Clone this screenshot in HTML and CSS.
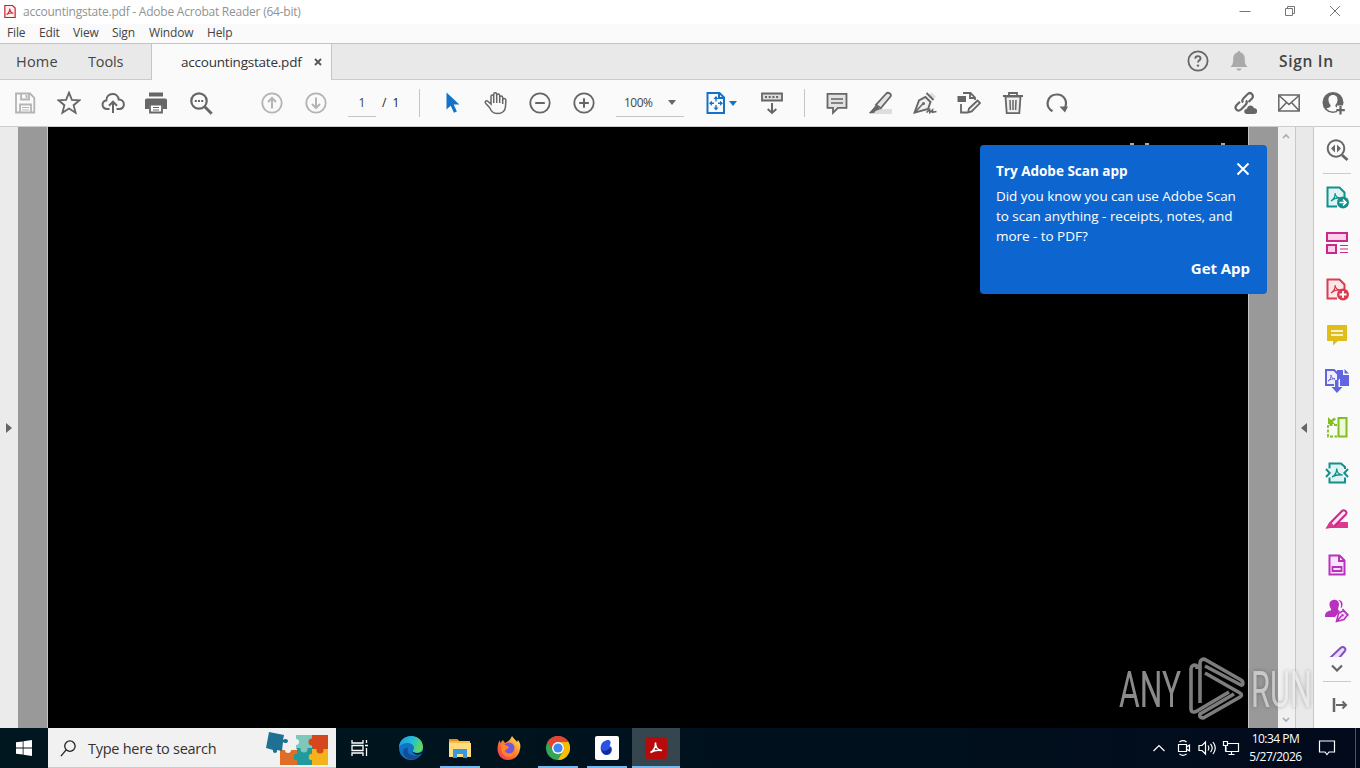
FILE: index.html
```html
<!DOCTYPE html>
<html lang="en">
<head>
  <meta charset="UTF-8" />
  <meta name="viewport" content="width=device-width, initial-scale=1.0" />
  <title>accountingstate.pdf - Adobe Acrobat Reader (64-bit)</title>
  <link rel="stylesheet" href="styles.css">
</head>
<body>
  <div class="titlebar">
    <svg class="app-icon" viewBox="0 0 14 16"><path d="M1 1h9l3 3v11H1z" fill="#fff0ee" stroke="#c9202f" stroke-width="1.4"/><path d="M3 11.500c2-1 4-4.500 3.700-7 0 3 1.500 5 4.300 5.500-3-.6-6 .2-8 1.500z" fill="none" stroke="#c9202f" stroke-width="1.200"/></svg>
    <span class="title">accountingstate.pdf - Adobe Acrobat Reader (64-bit)</span>
    <div class="window-buttons">
      <svg viewBox="0 0 12 12"><path d="M.5 6.500h11"/></svg>
      <svg viewBox="0 0 12 12"><path d="M1.500 3.500h7v7h-7zM3.500 3.500v-2h7v7h-2"/></svg>
      <svg viewBox="0 0 12 12"><path d="M1 1l10 10M11 1L1 11"/></svg>
    </div>
  </div>

  <div class="menubar">
    <span class="m-file">File</span><span class="m-edit">Edit</span><span class="m-view">View</span><span class="m-sign">Sign</span><span class="m-window">Window</span><span>Help</span>
  </div>

  <div class="tabs">
    <div class="tab-links"><span class="home">Home</span><span class="tools">Tools</span></div>
    <div class="tab-active"><span>accountingstate.pdf</span><svg viewBox="0 0 8 8"><path d="M1 1l6 6M7 1L1 7" stroke="#555" stroke-width="1.800"/></svg></div>
    <div class="tab-right">
      <svg class="help" viewBox="0 0 24 24"><circle cx="12" cy="12" r="9.600" fill="none" stroke="#666" stroke-width="1.800"/><path d="M9.200 9.600c.2-3.400 5.600-3.100 5.300 0-.1 1.700-2.500 1.900-2.500 4" fill="none" stroke="#666" stroke-width="1.900"/><circle cx="12" cy="16.600" r="1.200" fill="#666"/></svg>
      <svg class="bell" viewBox="0 0 24 24"><path d="M12 2c1 0 1.500.6 1.500 1.600 3 .8 4.300 3 4.300 6.400 0 4.500.8 6 2.700 8h-17c1.900-2 2.700-3.500 2.700-8 0-3.400 1.300-5.600 4.300-6.400C10.500 2.600 11 2 12 2zM9.500 19.500h5c-.3 2.800-4.700 2.800-5 0z" fill="#aaa"/></svg>
      <span class="signin">Sign In</span>
    </div>
  </div>

  <div class="toolbar">
    <div class="tools-group file-tools">
      <svg class="off" viewBox="0 0 24 24"><path d="M3 2.500h14l4.300 4.300v14.700H3zM8 2.500v6h8v-6M7 21v-7.500h11V21M13.500 4v3"/><path d="M9 16.500h7M9 19h7" stroke-width="1"/></svg>
      <svg viewBox="0 0 24 24"><path d="M12 1.600l2.900 7.200 7.700.5-6 4.900 2 7.500-6.600-4.200-6.600 4.200 2-7.500-6-4.900 7.700-.5z"/></svg>
      <svg viewBox="0 0 24 24"><path d="M8.500 18H6.300C.5 18-.2 10 5.300 9.600 5.500 1.200 17 .7 17.700 8.600c6.800-.2 6.700 9.400.8 9.400h-3M12 22V11M8 14.700l4-4 4 4" stroke-width="2"/></svg>
      <svg viewBox="0 0 24 24"><path d="M4 1.500h14v4H4zM2 7.500h18c1.200 0 2 .8 2 1.800V18h-4v-4H4v4H0V9.300c0-1 .8-1.800 2-1.800z" fill="#666" stroke="none"/><path d="M5 13.500h12v8H5z" fill="#fff"/><path d="M8 16.500h6M8 19h6" stroke-width="1.200"/></svg>
      <svg viewBox="0 0 24 24"><circle cx="10" cy="10" r="7.700" stroke-width="2.200"/><path d="M15.700 15.700l7 7" stroke-width="2.900"/><path d="M5.800 10h2M9 10h2M12.200 10h2" stroke-width="2"/></svg>
    </div>
    <div class="tools-group page-tools">
      <svg class="off" viewBox="0 0 24 24"><circle cx="12" cy="12" r="9.700"/><path d="M12 17.500V7M8 11l4-4 4 4" stroke-width="2"/></svg>
      <svg class="off" viewBox="0 0 24 24"><circle cx="12" cy="12" r="9.700"/><path d="M12 6.500V17M8 13l4 4 4-4" stroke-width="2"/></svg>
    </div>
    <div class="page-input">1</div>
    <span class="page-count">/ 1</span>
    <div class="sep"></div>
    <div class="tools-group view-tools">
      <svg viewBox="0 0 24 24"><path d="M6.500 1.500v17l4.200-3.800 3.200 7 3-1.300-3.200-6.800h5.700z" fill="#1473c9" stroke="none"/></svg>
      <svg viewBox="0 0 24 24"><path d="M5.500 16.500l-3.700-4c-1.600-2 .7-3.500 2.300-2L7 13V5.500c0-2 2.700-2 2.700 0v-2c0-2.300 3-2.300 3 0v1c0-2 3-2 3 0V6.500c0-2 3-2 3 0V9c.2-2 3.200-2 3.200.3l-.4 6.200c-.4 5-3.300 7-8 7-4.500 0-6-2-8-6zM9.700 5.500V12M12.700 4.500V12M15.700 5.500V12M18.700 8v5" stroke-width="1.500"/></svg>
      <svg viewBox="0 0 24 24"><circle cx="12" cy="12" r="9.700"/><path d="M7.200 12h9.600" stroke-width="2"/></svg>
      <svg viewBox="0 0 24 24"><circle cx="12" cy="12" r="9.700"/><path d="M7.200 12h9.600M12 7.200v9.600" stroke-width="2"/></svg>
    </div>
    <div class="zoom-select"><span>100%</span><i class="caret"></i></div>
    <div class="fit">
      <svg viewBox="0 0 24 24"><path d="M3.500 2h12L20 6.500V22H3.500zM15 2v5h5" stroke="#1473c9" stroke-width="2"/><path d="M12 6v4.500M12 14v4M6 12.300h4M14 12.300h4" stroke="#1473c9" stroke-width="1.400"/><path d="M12 5l2.500 3h-5zM12 19.500l2.500-3h-5zM5 12.300l3-2.500v5zM19 12.300l-3-2.500v5z" fill="#1473c9" stroke="none"/></svg>
      <i class="caret blue"></i>
    </div>
    <svg class="read-mode" viewBox="0 0 24 24"><path d="M2 2.500h20v7H2z" fill="#ddd"/><path d="M5 6h14" stroke-dasharray="2 1.700"/><path d="M12 12v10M7.700 18l4.300 4 4.300-4" stroke-width="2"/></svg>
    <div class="sep"></div>
    <div class="tools-group edit-tools">
      <svg viewBox="0 0 24 24"><path d="M2.500 2.800h19v14H13l-5 5v-5H2.500z" fill="#e2e2e2"/><path d="M6 8h12M6 12h12" stroke-width="1.400"/></svg>
      <svg viewBox="0 0 24 24"><path d="M9 18h14v5H4z" fill="#ddd" stroke="none"/><path d="M17.300 2.500c2-2 6 .8 4.200 3L11.700 17.300l-4.800-3.500z" fill="#e3e3e3"/><path d="M6.500 15l4 3-4 1.500-1.500 2.200-4.500.2 3.700-4z" fill="#666" stroke-width="1"/></svg>
      <svg viewBox="0 0 24 24"><path d="M16 4l2.500-2.500 4.500 4-2.500 2.500z" fill="#ddd" stroke="none"/><path d="M13.500 2l7 7M12.500 6l5 5-2.500 7L1.500 21.700l4.500-12.200z" fill="#f0f0f0" stroke-width="1.900"/><path d="M1.500 21.700l8.500-9" stroke-width="1.500"/><circle cx="10.500" cy="12.500" r="1.500" fill="#666" stroke="none"/><path d="M13.500 21.500l3-3 .3 3 2.700-2.500v2.300l4-.8" stroke-width="1.700"/></svg>
      <svg viewBox="0 0 24 24"><path d="M6 2h7.500L18 6.500V9M13 2v5h5M4 13v8.500h6"/><path d="M.5 5h8.500v6H.5z" fill="#666" stroke="none"/><path d="M11 21.500l1-4 8.500-8 2.500 2.600-8.300 8.300z" fill="#eee"/></svg>
      <svg viewBox="0 0 24 24"><path d="M2 5h20M8 4.500V2h8v2.500"/><path d="M4.500 5.500h15l-1.200 16.700H5.700z" fill="#eee"/><path d="M9 9l.4 10M12 9v10M15 9l-.4 10" stroke-width="1.500"/></svg>
      <svg viewBox="0 0 24 24"><path d="M7.500 20.300C-1 15.200 2.500 3.500 12 3.500c7.500 0 11.200 7.500 7.500 14" stroke-width="2.200"/><path d="M14.500 15.500l8.500 0-3 6z" fill="#666" stroke="none"/></svg>
    </div>
    <div class="tools-group share-tools">
      <svg viewBox="0 0 24 24"><path d="M10 11.500c-1.500-1.500-.5-3.300 1-4.800l3.500-3.500c3-3 7 1 4.500 4.300l-3.500 3.500M13 9.500c1.500 1.500.5 3.500-1 5l-4 4C5 21.200.7 17.800 3.500 14.200L7 10.800" stroke-width="2.200"/><path d="M14 23c-3.700 0-3.700-5 0-5.300.5-4.400 6.300-4.200 6.800-.7 4.500 0 4.300 6 .7 6z" fill="#666" stroke="none"/></svg>
      <svg viewBox="0 0 24 24"><path d="M1.800 4h20.400v16H1.800zM2 4.500l10 9 10-9M2 19.500l7.500-8M22 19.500l-7.500-8" stroke-width="1.500"/></svg>
      <svg viewBox="0 0 24 24"><circle cx="12" cy="11.500" r="10.500" fill="#666" stroke="none"/><path d="M12 4c3.300 0 4.800 2.300 4.500 5.300-.2 2-1 3.700-2 4.700-.5 1.700.5 2.200 4 3.500-1.500 2-4 3-6.500 3s-5-1-6.500-3c3.500-1.300 4.500-1.800 4-3.500-1-1-1.800-2.700-2-4.700C7.200 6.300 8.700 4 12 4z" fill="#fafafa" stroke="none"/><path d="M16 14.500h8v9h-8z" fill="#fafafa" stroke="none"/><path d="M19.500 15v8.500M15.300 19.200h8.500" stroke-width="2.200"/></svg>
    </div>
  </div>

  <div class="workspace">
    <div class="nav-strip"><i class="arrow right"></i></div>
    <div class="canvas">
      <div class="pdf-page">
        <i class="speck s1"></i><i class="speck s2"></i><i class="speck s3"></i>
      </div>
      <div class="promo">
        <div class="promo-head"><b>Try Adobe Scan app</b><svg viewBox="0 0 14 14"><path d="M1.500 1.500l11 11M12.500 1.500l-11 11" stroke="#fff" stroke-width="2"/></svg></div>
        <p>Did you know you can use Adobe Scan<br>to scan anything - receipts, notes, and<br>more - to PDF?</p>
        <div class="promo-action">Get App</div>
      </div>
    </div>
    <div class="scrollbar">
      <svg viewBox="0 0 8 6"><path d="M1 5l3-3 3 3"/></svg>
      <svg viewBox="0 0 8 6"><path d="M1 1l3 3 3-3"/></svg>
    </div>
    <div class="pane-strip"><i class="arrow left"></i></div>
    <div class="rail">
      <svg class="find" viewBox="0 0 24 24"><circle cx="11" cy="10.500" r="8.300" fill="none" stroke="#666" stroke-width="2"/><path d="M17 17l5.500 5" stroke="#666" stroke-width="2.800"/><path d="M10 6.500v8l-4-4zM12 6.500v8l4-4z" fill="#666"/></svg>
      <div class="rail-list">
        <svg viewBox="0 0 24 24"><path d="M12 21.500H2.500v-19h12l5 5V12" fill="#dff3f2" stroke="#12908c" stroke-width="2"/><path d="M6 16c3-2 4.500-5 4-8 .3 3 2.500 5 5.500 5-4-.3-7 .7-9.500 3" fill="none" stroke="#12908c" stroke-width="1.200"/><circle cx="18" cy="17.500" r="6" fill="#12908c"/><path d="M14.500 17.500h6M18 14.500l3 3-3 3" fill="none" stroke="#fff" stroke-width="1.700"/></svg>
        <svg viewBox="0 0 24 24"><path d="M2 2h20v8H2zM2 14h9v8H2z" fill="#ffd0ec" stroke="#ca288b" stroke-width="2"/><path d="M15 14.500h8M15 18h8M15 21.500h8" stroke="#ca288b" stroke-width="1.200"/></svg>
        <svg viewBox="0 0 24 24"><path d="M12 21.500H2.500v-19h12l5 5V12" fill="#ffe7e9" stroke="#d93c50" stroke-width="2"/><path d="M6 16c3-2 4.500-5 4-8 .3 3 2.500 5 5.500 5-4-.3-7 .7-9.500 3" fill="none" stroke="#d93c50" stroke-width="1.200"/><circle cx="18" cy="17.500" r="6" fill="#d93c50"/><path d="M14.500 17.500h7M18 14v7" stroke="#fff" stroke-width="1.800"/></svg>
        <svg viewBox="0 0 24 24"><path d="M3 2h18c1 0 1 .5 1 1v14c0 .7-.3 1-1 1h-8l-5 4.500V18H3c-.7 0-1-.3-1-1V3c0-.5.3-1 1-1z" fill="#e1bd1a"/><path d="M6 8h12M6 12h12" stroke="#fff" stroke-width="1.700"/></svg>
        <svg viewBox="0 0 24 24"><path d="M9 16H1V1h8l4 4v6" fill="#eef" stroke="#6265df" stroke-width="2"/><path d="M3 12c2-1 3.500-4 3-6 0 2 1.500 3.500 4 4-2-.5-5 .3-7 2" fill="none" stroke="#6265df" stroke-width="1"/><path d="M12 1h6v5h6v11h-9v-7h-3zM19.500 0l4.500 4.500h-4.500zM10 11h3.500v7h4L12 24l-5.500-6H10z" fill="#6265df"/></svg>
        <svg viewBox="0 0 24 24"><path d="M13.500 3h8v18.500h-8z" fill="#edf9db" stroke="#82bd22" stroke-width="2"/><path d="M12 10H3v11.500h9" fill="none" stroke="#82bd22" stroke-width="1.800" stroke-dasharray="3 1.500"/><path d="M3 2v7h7L7.700 6.700 11 4.500 9.500 2.500 6 5z" fill="#82bd22"/></svg>
        <svg viewBox="0 0 24 24"><path d="M5.500 8h13v9h-13z" fill="#dff3f2"/><path d="M4.500 7.500v-5H16L20 6v2M20 16.500v5H4.500v-5" fill="#dff3f2" stroke="#12908c" stroke-width="2"/><path d="M1 8l3.700 4L1 16M23 8l-3.700 4 3.700 4" fill="none" stroke="#12908c" stroke-width="2"/><path d="M7 16c3-1 5-5 4.700-8.500 0 3 2 6 5.800 6.500-4-.6-7 .1-10.500 2" fill="none" stroke="#12908c" stroke-width="1.400"/></svg>
        <svg viewBox="0 0 24 24"><path d="M14 15h8c.6 0 1 .4 1 1v5H6z" fill="#df388f"/><path d="M5 16.200L17 4c2-2 6 1 4 3.200L9 19.500 2.500 20.500z" fill="#ffe3f2" stroke="#ca288b" stroke-width="2"/><path d="M5.500 15l5 5-9.500 1.300z" fill="#df388f"/></svg>
        <svg viewBox="0 0 24 24"><path d="M4.500 2.500h10l5 5v14h-15zM14 2.500v5.500h5.500" fill="#fbe4fc" stroke="#b931be" stroke-width="2"/><path d="M7.500 14h9v4h-9z" fill="none" stroke="#b931be" stroke-width="1.800"/></svg>
        <svg viewBox="0 0 24 24"><path d="M8 1c5-1.500 7 3 5.500 7-.8 2.500-.5 3.500 1.500 4l-5 6H0c0-5 2-5.500 5.500-6.500C7 11 5.500 9.500 5 8 3.500 4.500 5 1.600 8 1zM13 1c4 0 5.500 3 4 7l-1.500 1.500c1-4 .6-6.500-2.500-8.500z" fill="#b931be"/><path d="M11.500 22.500l2-8 5-3 4 4.500-3.500 4.500zM17.500 10l6 6.500M11.500 22.500l5-5.500" fill="#fbe4fc" stroke="#b931be" stroke-width="1.600"/><circle cx="17.500" cy="16.200" r="1.200" fill="#b931be"/></svg>
        <svg class="clipped" viewBox="0 0 24 12"><path d="M5 13L15.500 3c3-2.500 6.500.5 4 3.500L14 13z" fill="#ecdcfa" stroke="#8450bd" stroke-width="2"/></svg>
      </div>
      <svg class="more" viewBox="0 0 14 8"><path d="M2 1.500l5 5 5-5"/></svg>
      <div class="rail-line"></div>
      <svg class="expand" viewBox="0 0 16 16"><path d="M2 1v14" stroke-width="2.500"/><path d="M4 8h10M10.500 4.500L14 8l-3.500 3.500"/></svg>
    </div>

    <svg class="watermark" viewBox="0 0 210 70">
      <g class="wm-text"><text x="5" y="52" textLength="62" lengthAdjust="spacingAndGlyphs">ANY</text><text x="137" y="52" textLength="61" lengthAdjust="spacingAndGlyphs">RUN</text></g>
      <path class="wm-logo" d="M83 14v-3c-3-2-6 0-6 3v40c0 3 3 4 6 2l32-19M86 48V8c0-3 3-5 6-3l35 20c3 2 2 6 0 5L91 11M91 18l35 20c2 1 2 3 0 4L91 62c-3 2-6 0-5-3l34-20"/>
    </svg>
  </div>

  <div class="taskbar">
    <div class="start"><svg viewBox="0 0 16 16"><path d="M0 2.300l6.700-.9v6.200H0zM7.500 1.300L16 0v7.600H7.500zM0 8.400h6.700v6.200L0 13.700zM7.500 8.400H16V16l-8.500-1.300z" fill="#fff"/></svg></div>
    <div class="search">
      <svg class="search-icon" viewBox="0 0 18 18"><circle cx="10.500" cy="6.500" r="5.500"/><path d="M6.500 10.500L1 17"/></svg>
      <span>Type here to search</span>
      <svg class="puzzle" viewBox="0 0 64 36">
        <path d="M14 20h17v15H14z" fill="#df6e28"/><path d="M30 5h16v14H30z" fill="#7fc6bb"/><path d="M46 5h16v15H46z" fill="#d5471c"/><path d="M31 18h16v17H31z" fill="#219a9d"/><path d="M46 19h16v16H46z" fill="#f4b21b"/>
        <circle cx="22" cy="20" r="3" fill="#f1f1f1"/><circle cx="31" cy="27" r="3.300" fill="#219a9d"/><circle cx="38" cy="19" r="3.500" fill="#7fc6bb"/><circle cx="46" cy="12" r="3.500" fill="#d5471c"/><circle cx="46" cy="27" r="3.300" fill="#f4b21b"/><circle cx="54" cy="20" r="3.500" fill="#d5471c"/><circle cx="30" cy="12" r="3" fill="#f1f1f1"/>
        <path d="M3 2l15 3-1 5c2-2 5-1 5 1s-3 3-5 1l-1 9-5-1c1 4-5 4-4 0l-7-2z" fill="#1f7194"/>
      </svg>
    </div>
    <div class="task"><svg class="task-view" viewBox="0 0 18 18"><path d="M1 1v3h11V1M1 17v-3h11v3M1 6.500h11v5H1zM15.500 1v3M15.500 9v8M14 6.500h3"/></svg></div>
    <div class="apps">
      <div class="app"><svg viewBox="0 0 24 24"><defs><linearGradient id="edge" x1="0" y1="0" x2="1" y2="0.300"><stop offset="0" stop-color="#1698dd"/><stop offset=".6" stop-color="#25bfd0"/><stop offset="1" stop-color="#61d65d"/></linearGradient></defs><circle cx="12" cy="12" r="12" fill="#1173c7"/><path d="M0 11C1-3 23-4 24 11c0 5-5 7-10 5-1-1 1-2 1-4 0-6-11-7-15-1z" fill="url(#edge)"/><path d="M9 12c-2 6 4 9 12 7-4 6-13 6-16 0-2-4 0-8 4-7z" fill="#154d91"/><path d="M13 15c3 3 7 3 11 0-2 5-9 5-11 0z" fill="#01141d"/></svg></div>
      <div class="app open"><svg viewBox="0 0 24 24"><path d="M1 3h8l2 2h11v16H1z" fill="#f4bd40"/><path d="M1 7h22v14H1z" fill="#ffdc7b"/><path d="M1 3h8l2 2H1z" fill="#e58c20"/><path d="M5 13h14v9h-4v-4H9v4H5z" fill="#3898df"/></svg></div>
      <div class="app"><svg viewBox="0 0 24 24"><defs><linearGradient id="fox" x1="1" y1="0" x2="0" y2="1"><stop offset="0" stop-color="#fff15b"/><stop offset=".5" stop-color="#ff7d27"/><stop offset="1" stop-color="#f22c5a"/></linearGradient></defs><path d="M15 0c2 3 4 4 5 6l1-2c2 3 3 5 2 9-1 7-6 11-12 11C3 24-1 16 1 9c0-2 1-3 2-5v3l3-3 2 3c3-1 5-3 7-7z" fill="url(#fox)"/><circle cx="12" cy="12" r="5.500" fill="#7655df"/><path d="M4 9c3-1 5 0 8 2-1 3-4 2-4 4 2 4 7 3 9 0 0 9-14 8-13-6z" fill="#ff852b"/></svg></div>
      <div class="app open"><svg viewBox="0 0 24 24"><circle cx="12" cy="12" r="12" fill="#35a654"/><path d="M1.600 6A12 12 0 0 1 22.400 6H12a6 6 0 0 0-5.200 9z" fill="#e94235"/><path d="M22.400 6A12 12 0 0 1 12 24l5.200-9A6 6 0 0 0 12 6z" fill="#fbbd04"/><circle cx="12" cy="12" r="6" fill="#fff"/><circle cx="12" cy="12" r="4.600" fill="#4285f4"/></svg></div>
      <div class="app open"><svg viewBox="0 0 24 24"><rect width="24" height="24" rx="2" fill="#fff"/><path d="M11 4.500c4-1.500 6 1.500 3.500 5.500 4 .5 3 8.500-2 9-8 1-9.500-12.500-1.500-14.500z" fill="#2953e5"/><path d="M16 12c-2 0-3 1.500-4.500 2.500-2 .8-4 0-5-1 1 7 10 7 9.500-1.500z" fill="#142c8b"/></svg></div>
      <div class="app open current"><svg viewBox="0 0 24 24"><rect x="1" y="1" width="22" height="22" rx="3" fill="#b60b0b"/><path d="M6.500 16.500c2.500-1 5.500-5 5-10-.3 4 2 7.500 6.500 8-4-.8-8 0-11.500 2z" fill="none" stroke="#fff" stroke-width="1.600"/></svg></div>
    </div>
    <div class="tray">
      <svg class="chevron" viewBox="0 0 14 14"><path d="M1.500 10L7 4.500l5.500 5.500"/></svg>
      <svg class="camera" viewBox="0 0 14 16"><path d="M1.500 4.500h8v7h-8zM9.500 7l3-2v6l-3-2M2.500 2c2-1.500 5-1.500 7 0M2.500 14c2 1.500 5 1.500 7 0"/></svg>
      <svg class="volume" viewBox="0 0 18 16"><path d="M1 5.500h3l3.500-3.500v12L4 10.500H1zM10 5.500c1 1.500 1 3.500 0 5M12.500 3.800c2 2.500 2 6 0 8.400M15 2c3 4 3 8 0 12"/></svg>
      <svg class="network" viewBox="0 0 18 16"><path d="M6 3.500h10.500v8H4v-5M9.500 11.500v2.500M6.500 14.500h6M1.500 1.500h4v4h-4zM3.500 5.500v6"/></svg>
      <div class="clock"><span class="time">10:34 PM</span><span class="date">5/27/2026</span></div>
      <svg class="notice" viewBox="0 0 18 18"><path d="M1.500 2h15v11H11L9 15.500 7 13H1.500z"/></svg>
      <div class="show-desktop"></div>
    </div>
  </div>
</body>
</html>
```

FILE: styles.css
```css
    * {
      box-sizing: border-box;
    }

    body {
      margin: 0;
      width: 1360px;
      height: 768px;
      overflow: hidden;
      display: flex;
      flex-direction: column;
      font-family: "Open Sans", "Noto Sans", sans-serif;
      color: #444;
      background: #fafafa;
      white-space: nowrap;
    }

    svg { display: block; flex: none; }

    .titlebar {
      height: 24px;
      background: #fff;
      display: flex;
      align-items: center;
      padding: 0 0 2px 4px;
      font-size: 12px;
      color: #929292;
    }

    .app-icon { width: 12px; height: 15px; margin-right: 7px; }
    .title { letter-spacing: -0.23px; }

    .window-buttons {
      margin: -1px 19px 0 auto;
      display: flex;
      gap: 33px;
    }

    .window-buttons svg {
      width: 12px;
      height: 12px;
      fill: none;
      stroke: #777;
    }

    .menubar {
      height: 19px;
      padding: 0 0 2px 7px;
      display: flex;
      align-items: center;
      font-size: 12px;
      letter-spacing: -0.15px;
    }

    .menubar .m-file { width: 32px; }
    .menubar .m-edit { width: 34px; }
    .menubar .m-view { width: 39px; }
    .menubar .m-sign { width: 37px; }
    .menubar .m-window { width: 58px; }

    .tabs {
      height: 37px;
      display: flex;
      background: #e9e9e9;
      border-top: 1px solid #c5c5c5;
      border-bottom: 1px solid #ccc;
    }

    .tab-links {
      width: 151px;
      padding-left: 16px;
      display: flex;
      align-items: center;
      font-size: 14.5px;
    }

    .home { width: 72px; letter-spacing: 0.2px; }
    .tools { letter-spacing: -0.15px; }

    .tab-active {
      width: 181px;
      height: 36px;
      padding: 0 9px 0 29px;
      display: flex;
      align-items: center;
      justify-content: space-between;
      background: #fafafa;
      border-left: 1px solid #c5c5c5;
      border-right: 1px solid #c5c5c5;
      font-size: 13.5px;
      letter-spacing: -0.22px;
      color: #333;
    }

    .tab-active svg { width: 8px; height: 8px; }

    .tab-right {
      margin-left: auto;
      padding: 0 25px 2px 0;
      display: flex;
      align-items: center;
    }

    .help { width: 24px; height: 24px; margin-right: 17px; }
    .bell { width: 24px; height: 24px; margin-right: 28px; }
    .signin { width: 56px; font-size: 15.5px; font-weight: 600; letter-spacing: 0.7px; }

    .toolbar {
      height: 47px;
      display: flex;
      align-items: center;
      border-bottom: 1px solid #ccc;
      padding: 0 5px 0 3px;
    }

    .toolbar svg {
      width: 24px;
      height: 24px;
      fill: none;
      stroke: #666;
      stroke-width: 1.8;
    }

    .toolbar svg.off { stroke: #b4b4b4; }
    .tools-group { display: flex; gap: 20px; padding: 0 10px; }
    .page-tools { margin-left: 27px; }

    .page-input {
      width: 28px;
      height: 28px;
      margin-left: 10px;
      text-align: center;
      font-size: 12px;
      line-height: 28px;
      border-bottom: 1px solid #c5c5c5;
    }

    .page-count { width: 37px; margin-left: 6px; padding-bottom: 1px; font-size: 12px; color: #222; word-spacing: 3px; }
    .sep { width: 1px; height: 28px; background: #c5c5c5; }
    .view-tools { margin-left: 10px; }

    .zoom-select {
      width: 68px;
      height: 28px;
      margin-left: 10px;
      padding: 0 8px;
      display: flex;
      align-items: center;
      justify-content: space-between;
      border-bottom: 1px solid #c5c5c5;
      font-size: 12px;
      letter-spacing: -0.5px;
    }

    .caret {
      border: 4px solid transparent;
      border-top: 5px solid #666;
      border-bottom: 0;
    }

    .caret.blue { border-top-color: #1473c9; }
    .fit { display: flex; align-items: center; gap: 1px; margin-left: 20px; }
    .read-mode { margin: 0 20px 0 23px; }
    .edit-tools { margin-left: 10px; }
    .share-tools { margin-left: auto; }

    .workspace {
      flex: 1;
      min-height: 0;
      display: flex;
      position: relative;
    }

    .nav-strip {
      width: 18px;
      display: flex;
      align-items: center;
      padding-left: 6px;
      background: #ebebeb;
    }

    .arrow { border: 5px solid transparent; }
    .arrow.right { border-left: 6px solid #666; border-right: 0; }
    .arrow.left { border-right: 6px solid #666; border-left: 0; }

    .canvas {
      width: 1260px;
      padding: 0 29px;
      position: relative;
      background: #999;
    }

    .pdf-page {
      height: 100%;
      background: #000;
      border: 1px solid #c4c4c4;
      border-width: 0 1px;
      position: relative;
    }

    /* tops of the letters hidden behind the popup */
    .speck {
      position: absolute;
      top: 16px;
      width: 4px;
      height: 2px;
      background: #aaa;
    }

    .s1 { left: 1082px; }
    .s2 { left: 1097px; }
    .s3 { left: 1173px; }

    .promo {
      position: absolute;
      left: 962px;
      top: 18px;
      z-index: 2;
      width: 287px;
      height: 149px;
      padding: 16px 17px 0 16px;
      border-radius: 4px;
      background: #0d66d0;
      color: #fff;
      font-size: 13.5px;
      line-height: 20px;
      letter-spacing: -0.04px;
    }

    .promo-head { display: flex; justify-content: space-between; }
    .promo-head b { font-size: 13.5px; letter-spacing: 0; }
    .promo-head svg { width: 14px; height: 14px; margin-top: 1px; }
    .promo p { margin: 5px 0 12px; }
    .promo-action { text-align: right; font-weight: 700; font-size: 15px; }

    .scrollbar {
      width: 17px;
      padding: 6px 0 5px 4px;
      display: flex;
      flex-direction: column;
      justify-content: space-between;
      background: #f0f0f0;
    }

    .scrollbar svg {
      width: 8px;
      height: 6px;
      fill: none;
      stroke: #aaa;
      stroke-width: 1.6;
    }

    .pane-strip {
      width: 19px;
      display: flex;
      align-items: center;
      padding-left: 5px;
      background: #e9e9e9;
      border-left: 1px solid #c8c8c8;
      border-right: 1px solid #c8c8c8;
    }

    .rail {
      width: 46px;
      padding-top: 11px;
      display: flex;
      flex-direction: column;
      align-items: center;
    }

    .find { width: 24px; height: 24px; }

    .rail-list {
      width: 28px;
      margin-top: 11px;
      padding-top: 11px;
      border-top: 1px solid #ccc;
      display: flex;
      flex-direction: column;
      align-items: center;
      gap: 22px;
    }

    .rail-list svg { width: 24px; height: 24px; }
    .rail-list .clipped { height: 12px; }

    .more { width: 14px; height: 8px; margin-top: 7px; fill: none; stroke: #666; stroke-width: 2.2; }
    .rail-line { width: 28px; height: 1px; margin-top: 9px; background: #ccc; }
    .expand { width: 16px; height: 16px; margin: 15px 0 0 5px; fill: none; stroke: #666; stroke-width: 2; }

    .watermark {
      position: absolute;
      left: 1114px;
      top: 528px;
      width: 210px;
      height: 70px;
      opacity: 0.6;
      z-index: 3;
      filter: drop-shadow(0 0 2px rgba(0, 0, 0, 0.45));
    }

    .wm-text {
      font-family: Roboto, sans-serif;
      font-size: 50px;
      font-weight: 400;
      fill: #e8e8e8;
    }

    .wm-logo { fill: none; stroke: #d0d0d0; stroke-width: 3.6; }

    .taskbar {
      height: 40px;
      display: flex;
      background: linear-gradient(to right, #01171f, #00111d 60%, #020a1c);
      color: #fff;
    }

    .start { width: 48px; padding: 12px 0 0 16px; }
    .start svg { width: 16px; height: 16px; }

    .search {
      width: 288px;
      padding: 1px 6px 0 12px;
      display: flex;
      align-items: center;
      background: #f1f1f1;
      border-bottom: 1px solid #ccc;
      color: #333;
      font-size: 14.5px;
      letter-spacing: -0.27px;
    }

    .search-icon { width: 17px; height: 17px; margin-right: 11px; fill: none; stroke: #222; stroke-width: 1.4; }
    .puzzle { width: 64px; height: 36px; margin: -1px 0 0 auto; }

    .task { width: 51px; padding: 11px 0 0 15px; }
    .task-view { width: 18px; height: 18px; fill: none; stroke: #fff; stroke-width: 1.3; }

    .apps { display: flex; gap: 1px; }

    .app {
      width: 48px;
      height: 40px;
      display: flex;
      align-items: center;
      justify-content: center;
      position: relative;
    }

    .app svg { width: 24px; height: 24px; }

    .app.open::after {
      content: "";
      position: absolute;
      left: 4px;
      right: 4px;
      bottom: 0;
      height: 2px;
      background: #76b9ed;
    }

    .app.current { background: #36464f; }
    .app.current::after { left: 0; right: 0; }

    .tray {
      margin-left: auto;
      display: flex;
      align-items: center;
    }

    .tray svg { fill: none; stroke: #fff; stroke-width: 1.2; }
    .chevron { width: 14px; height: 14px; margin-right: 11px; }
    .camera { width: 14px; height: 16px; margin-right: 7px; }
    .volume { width: 18px; height: 16px; margin-right: 6px; }
    .network { width: 18px; height: 16px; margin-right: 8px; }

    .clock {
      width: 55px;
      display: flex;
      flex-direction: column;
      align-items: center;
      margin-top: -1px;
      font-size: 12px;
      line-height: 18px;
      letter-spacing: -0.5px;
    }

    .notice { width: 18px; height: 18px; margin: 0 19px 0 15px; }
    .show-desktop { width: 5px; height: 40px; border-left: 1px solid #4b535f; }
```
